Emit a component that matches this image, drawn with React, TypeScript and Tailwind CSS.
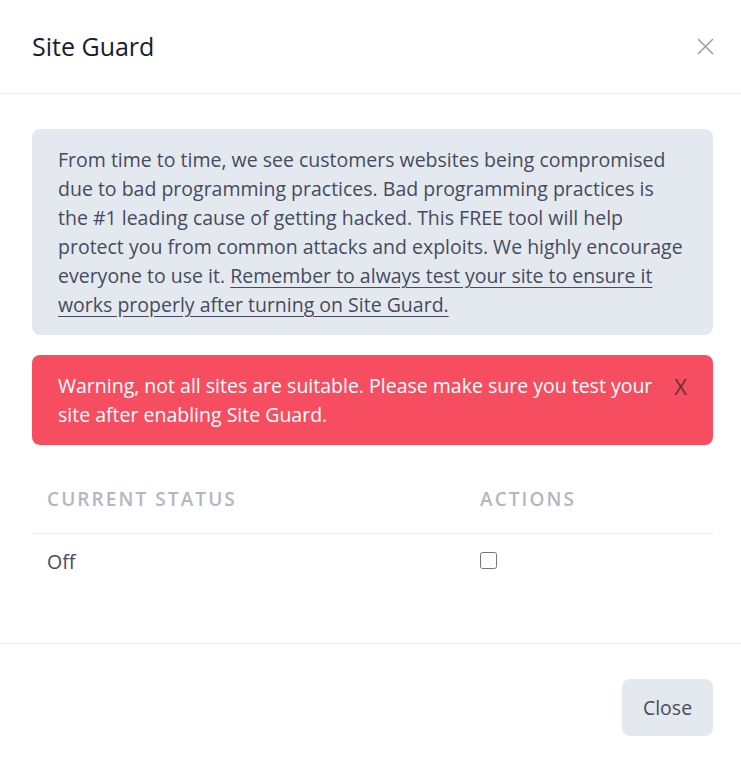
const font = { fontFamily: '"Open Sans", sans-serif' };

export default function App() {
  return (
    <div className="w-[741px] h-[767px] bg-white text-[#3f4254]" style={font}>
      <div className="flex items-center justify-between h-[94px] pl-8 pr-[27px] border-b border-[#ebedf3]">
        <h2 className="text-[25px] text-[#181c32] font-normal">Site Guard</h2>
        <button className="text-[#9da1b0] -mt-[1px]">
          <svg width="17" height="17" viewBox="0 0 17 17" fill="none" stroke="currentColor" strokeWidth="1.7" strokeLinecap="round">
            <path d="M1.5 1.5 15.5 15.5M15.5 1.5 1.5 15.5" />
          </svg>
        </button>
      </div>

      <div className="pl-8 pr-7 pt-[35px] pb-[53px]">
        <div className="rounded-lg bg-[#e4e9ef] px-[26px] py-[16px] text-[19.5px] leading-[29px] text-[#474a5e]">
          From time to time, we see customers websites being compromised due to bad programming practices.
          Bad programming practices is the #1 leading cause of getting hacked. This FREE tool will help
          protect you from common attacks and exploits. We highly encourage everyone to use it.{" "}
          <span className="underline underline-offset-4">
            Remember to always test your site to ensure it works properly after turning on Site Guard.
          </span>
        </div>

        <div className="mt-5 flex items-start rounded-lg bg-[#f64e60] pl-[26px] pr-[26px] py-[16px] text-white">
          <p className="flex-1 text-[19.5px] leading-[29px]">
            Warning, not all sites are suitable. Please make sure you test your site after enabling Site Guard.
          </p>
          <span className="ml-5 mt-[1px] text-[22px] leading-[29px] text-[#6b2f3a]">X</span>
        </div>

        <table className="mt-[25px] w-full text-left">
          <thead>
            <tr className="border-b border-[#ebedf3]">
              <th className="w-[448px] pl-[15px] h-[63px] pb-[5px] text-[19px] font-semibold tracking-[0.11em] text-[#b5b5c3]">
                CURRENT STATUS
              </th>
              <th className="pb-[5px] text-[19px] font-semibold tracking-[0.11em] text-[#b5b5c3]">ACTIONS</th>
            </tr>
          </thead>
          <tbody>
            <tr>
              <td className="pl-[15px] h-[57px] text-[19.5px] text-[#474a5e]">Off</td>
              <td className="align-top pt-[18px]">
                <input type="checkbox" className="block w-[17px] h-[17px] accent-[#3699ff]" />
              </td>
            </tr>
          </tbody>
        </table>
      </div>

      <div className="flex justify-end pr-7 pt-[35px] border-t border-[#ebedf3]">
        <button className="h-[57px] w-[91px] rounded-lg bg-[#e4e9ef] text-[19.5px] text-[#474a5e]">
          Close
        </button>
      </div>
    </div>
  );
}
